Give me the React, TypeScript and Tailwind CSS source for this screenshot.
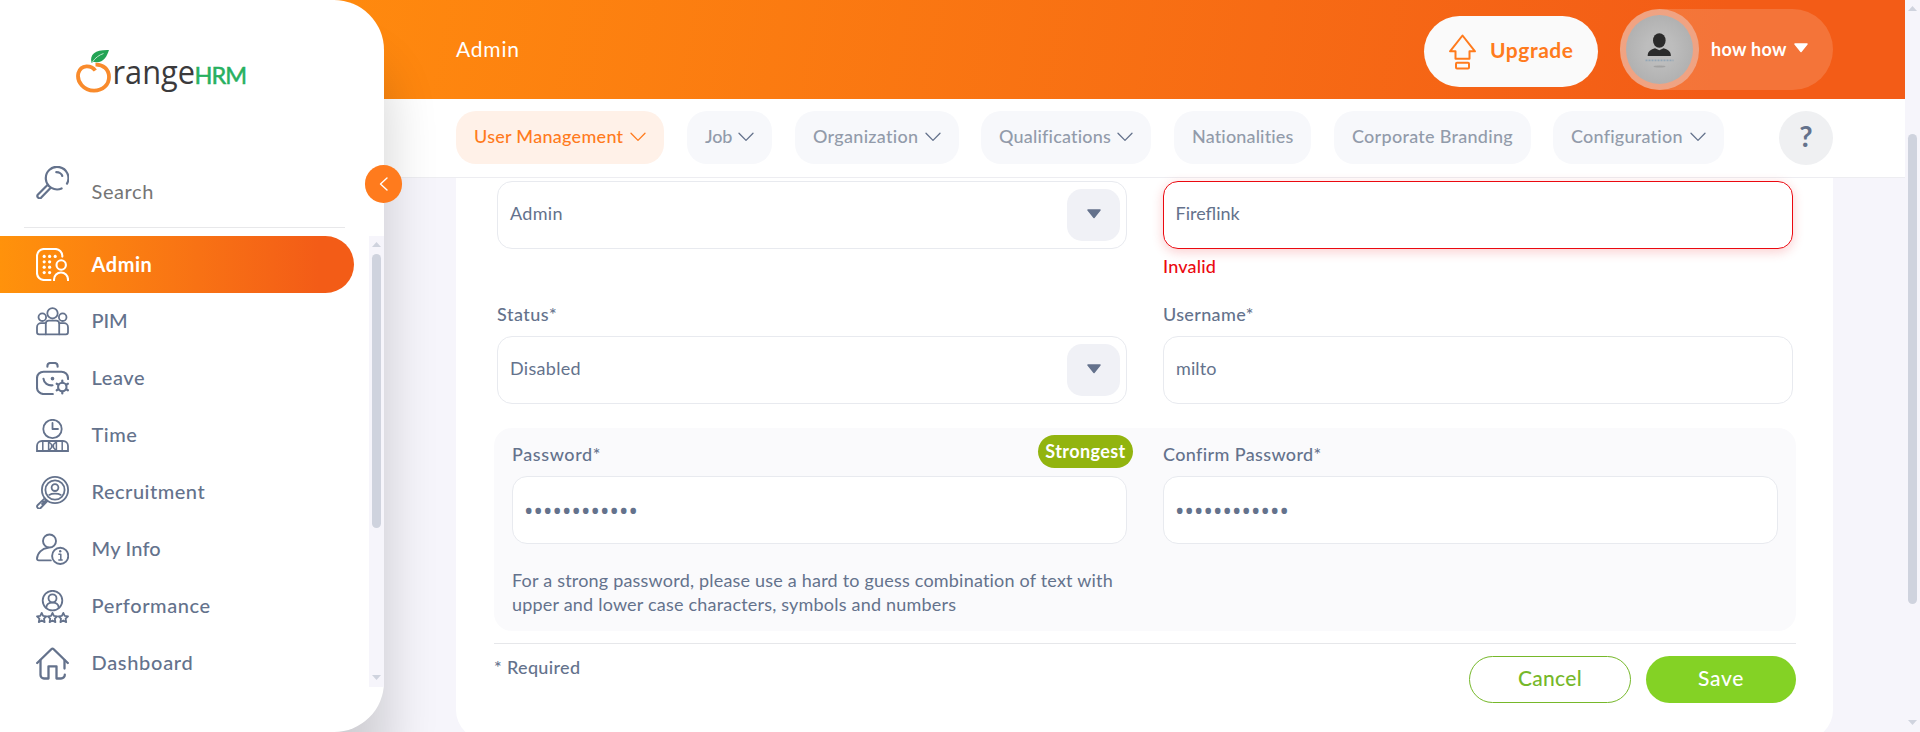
import React from "react";

type IconProps = { children: React.ReactNode; w?: number };
const Icon = ({ children, w = 1.8 }: IconProps) => (
  <svg width="33" height="33" viewBox="0 0 33 33" fill="none" stroke="currentColor" strokeWidth={w} strokeLinecap="round" strokeLinejoin="round" className="shrink-0">
    {children}
  </svg>
);

const SearchIcon = () => (
  <Icon w={2.2}>
    <path d="M31 17.6A11.3 11.3 0 1 0 25.6 22.5" />
    <path d="M20.3 6.2c3 0 5.6 1.8 6 3.8" />
    <path d="M10.2 20.3 2 28.6a2.2 2.2 0 0 0 3 3.2L14 22.6M10.2 20.3l1.8-1.6M14 22.6" />
  </Icon>
);
const AdminIcon = () => (
  <Icon w={2.1}>
    <path d="M26.3 8.6V8a7 7 0 0 0-7-7H8a7 7 0 0 0-7 7v17a7 7 0 0 0 7 7h6.5" />
    <circle cx="25.2" cy="17" r="4.7" />
    <path d="M18 32.3v-.8a7 7 0 0 1 14 0v.8" />
    <g fill="currentColor" stroke="none">
      <circle cx="8.2" cy="8.4" r="1.6" /><circle cx="13.6" cy="8.4" r="1.6" /><circle cx="19.2" cy="8.4" r="1.6" />
      <circle cx="8.2" cy="13.8" r="1.6" /><circle cx="13.6" cy="13.8" r="1.6" />
      <circle cx="8.2" cy="19.2" r="1.6" /><circle cx="13.6" cy="19.2" r="1.6" />
      <circle cx="8.2" cy="24.6" r="1.6" /><circle cx="13.6" cy="24.6" r="1.6" />
    </g>
  </Icon>
);
const PimIcon = () => (
  <Icon w={1.8}>
    <circle cx="16.5" cy="8.3" r="5.2" />
    <circle cx="6.3" cy="12.2" r="3.8" />
    <circle cx="26.7" cy="12.2" r="3.8" />
    <path d="M9.8 29.3V18.6a3 3 0 0 1 3-3h7.4a3 3 0 0 1 3 3v10.7" />
    <path d="M9.6 18.2H5a4 4 0 0 0-4 4v5.1a2 2 0 0 0 2 2h27a2 2 0 0 0 2-2v-5.1a4 4 0 0 0-4-4h-4.6" />
  </Icon>
);
const LeaveIcon = () => (
  <Icon w={2.1}>
    <path d="M11.4 4.8V4a3 3 0 0 1 3-3h4.2a3 3 0 0 1 3 3v.8" />
    <path d="M32 17v-.8a6.5 6.5 0 0 0-6.5-6.5h-18A6.5 6.5 0 0 0 1 16.2v9.3A6.5 6.5 0 0 0 7.5 32H16.8" />
    <path d="M7.5 16.8c.3 4.2 4.5 7 9 6.5" />
    <circle cx="16.5" cy="16.6" r=".8" fill="currentColor" />
    <circle cx="26.3" cy="25" r="4.2" />
    <path strokeWidth="2.2" d="M26.3 20.5v-2M26.3 31.5v-2M22.4 22.7l-1.7-1M31.9 28.3l-1.7-1M22.4 27.3l-1.7 1M31.9 21.7l-1.7 1" />
  </Icon>
);
const TimeIcon = () => (
  <Icon w={1.8}>
    <circle cx="16.5" cy="10" r="9.2" />
    <path d="M16.5 4v6h5.5" />
    <path strokeLinejoin="miter" d="M1 32v-5a5 5 0 0 1 5-5h21a5 5 0 0 1 5 5v5z" />
    <path strokeWidth="1.5" d="M6.8 23v9M12.6 22v10M20.4 22v10M26.2 23v9M13.4 23.5l2.2 2v3l-2.2 2.500M19.600 23.500l-2.200 2v3l2.200 2.500M15.600 27h1.800" />
  </Icon>
);
const RecruitmentIcon = () => (
  <Icon w={1.8}>
    <circle cx="19" cy="14" r="13.1" />
    <circle cx="19" cy="14" r="9.6" />
    <circle cx="19" cy="11.6" r="3.4" />
    <path d="M13.2 18.9c1.5-.9 3.5-1.2 5.8-1.2s4.300.3 5.800 1.200" />
    <path d="M8.7 22.3 1.8 29a2 2 0 0 0 2.8 3l6.7-6.9M7 25.7l1.8 1.8M10.4 23.8 6 28" />
  </Icon>
);
const InfoIcon = () => (
  <Icon w={1.9}>
    <circle cx="13.5" cy="8" r="6.5" />
    <path d="M14.8 27.4H2.7c-1 0-1.7-.7-1.7-1.7C1.3 20 6 15.4 12 14.8" />
    <circle cx="24.2" cy="22.9" r="8.1" />
    <path strokeWidth="1.5" strokeLinecap="butt" d="M22.3 21.3h2.5v6M22.3 27h4.4" />
    <circle cx="24.2" cy="18.3" r="1.2" fill="currentColor" stroke="none" />
  </Icon>
);
const STAR = "M0-4.700 1.400-1.700 4.700-1.300 2.300 1 2.900 4.500 0 2.900-2.900 4.500-2.300 1-4.700-1.300-1.400-1.700z";
const PerformanceIcon = () => (
  <Icon w={1.8}>
    <circle cx="16.5" cy="10.6" r="9.8" />
    <circle cx="16.5" cy="8.3" r="4" />
    <path d="M10.3 17.7c.2-3.2 2.5-5 6.2-5s6 1.8 6.2 5" />
    <path transform="translate(5.7 27.6)" d={STAR} />
    <path transform="translate(16.5 27.6)" d={STAR} />
    <path transform="translate(27.3 27.6)" d={STAR} />
  </Icon>
);
const DashboardIcon = () => (
  <Icon w={2.3}>
    <path d="M1.2 16 15.3 2.2a1.7 1.7 0 0 1 2.4 0L31.8 16" />
    <path d="M28.5 13.5V21.5" />
    <path d="M4.5 13.5V28a3.5 3.5 0 0 0 3.5 3.5h4.5V19.3h8v12.2h4.5a3.8 3.8 0 0 0 3.8-3.8" />
  </Icon>
);

const Logo = () => (
  <svg width="172" height="48" viewBox="0 0 172 48" className="ml-[76px] mt-[49px] block">
    <path d="M19.3 21.5C15.5 16.3 5 14.8 2.3 24.300.5 33 8 41.500 18 41.700c9 0 15-6 15-13.700 0-8-6-12.600-13.500-12.300" fill="none" stroke="#f98b2c" strokeWidth="3.8" />
    <path d="M15.5 13.5C13.5 5 19.5.6 33 1c-2 6.5-5.5 12.5-12.5 12.3-1.4 0-2.5-.3-3.5-.2l-1.5 1z" fill="#23a455" />
    <path d="M16.5 13C19 9 23 6 27.5 4.5" stroke="#bfe5cb" strokeWidth="1" fill="none" />
    <text x="36.5" y="35" fontFamily="Open Sans, sans-serif" fontSize="32" textLength="82.5" lengthAdjust="spacingAndGlyphs" fill="#3b3a3c">range</text>
    <text x="118.5" y="35" fontFamily="Lato, sans-serif" fontSize="23.5" textLength="52.5" lengthAdjust="spacing" fill="#27b05f" stroke="#27b05f" strokeWidth=".5">HRM</text>
  </svg>
);

const Chevron = () => (
  <svg width="16" height="10" viewBox="0 0 16 10" fill="none" stroke="currentColor" strokeWidth="1.3" strokeLinecap="round" strokeLinejoin="round" className="mb-px mr-[0.5px] shrink-0">
    <path d="M1 1.2 8 8.4 15 1.2" />
  </svg>
);

const Caret = () => (
  <svg width="14" height="10" viewBox="0 0 14 10" fill="currentColor" stroke="currentColor" strokeWidth="1.5" strokeLinejoin="round">
    <path d="M1 1h12L7 8.5z" />
  </svg>
);

const menu = [
  { label: "PIM", icon: <PimIcon />, cls: "tracking-[-0.1px]" },
  { label: "Leave", icon: <LeaveIcon />, cls: "tracking-[0.6px]" },
  { label: "Time", icon: <TimeIcon />, cls: "tracking-[0.5px]" },
  { label: "Recruitment", icon: <RecruitmentIcon />, cls: "tracking-[0.5px]" },
  { label: "My Info", icon: <InfoIcon />, cls: "tracking-[0.2px]" },
  { label: "Performance", icon: <PerformanceIcon />, cls: "tracking-[0.6px]" },
  { label: "Dashboard", icon: <DashboardIcon />, cls: "tracking-[0.7px]" },
];

const tabs = [
  { label: "Job", arrow: true, cls: "ml-[23px] w-[85px]", t: "tracking-[-0.1px]" },
  { label: "Organization", arrow: true, cls: "ml-[23px] w-[164px]", t: "tracking-[0.3px]" },
  { label: "Qualifications", arrow: true, cls: "ml-[22px] w-[170px]", t: "tracking-[0.2px]" },
  { label: "Nationalities", arrow: false, cls: "ml-[23px] w-[137px]", t: "tracking-[0.15px]" },
  { label: "Corporate Branding", arrow: false, cls: "ml-[23px] w-[197px]", t: "tracking-[0.28px]" },
  { label: "Configuration", arrow: true, cls: "ml-[22px] w-[171px]", t: "tracking-[0.23px]" },
];

const UpArrow = () => (
  <svg width="9" height="5" viewBox="0 0 9 5" fill="#cfd3de" className="block"><path d="M0 5 4.5 0 9 5z" /></svg>
);
const DownArrow = () => (
  <svg width="9" height="5" viewBox="0 0 9 5" fill="#cfd3de" className="block"><path d="M0 0h9L4.5 5z" /></svg>
);

const Select = ({ value, t }: { value: string; t: string }) => (
  <div className="flex h-[68px] w-[630px] items-center justify-between rounded-[15px] border border-[#e8eaef] bg-white pl-3 pr-1.5">
    <span className={`pb-1 text-[18px] ${t}`}>{value}</span>
    <span className="flex h-[52px] w-[53px] items-center justify-center rounded-[15px] bg-[#f0f1f6] pb-[3px]"><Caret /></span>
  </div>
);

const PasswordDots = () => (
  <div className="flex h-[68px] items-center rounded-[15px] border border-[#e8eaef] bg-white pl-[11px] pt-0.5 font-['Noto_Sans',sans-serif] text-[25px]">
    <span className="tracking-[0.1px]">••••••••••••</span>
  </div>
);

export default function App() {
  return (
    <div className="flex h-[732px] w-[1920px] overflow-hidden bg-[#f6f5fb] font-['Lato',sans-serif] text-[#64728c]">
      <aside className="relative z-10 flex h-[732px] w-[384px] shrink-0 flex-col rounded-r-[50px] bg-white shadow-[5px_60px_50px_rgba(0,0,0,0.16)]">
        <Logo />
        <div className="mt-[69px] flex h-[61px] items-start pl-9">
          <SearchIcon />
          <span className="ml-[22.5px] mt-[10px] text-[20px] leading-[30px] tracking-[0.6px] text-[#757575]">Search</span>
        </div>
        <div className="ml-6 h-px w-[321px] bg-[#e8e8ea]" />
        <div className="mt-2 flex h-[451px] justify-between">
          <nav className="w-[354px]">
            <div className="flex h-[57px] items-center rounded-r-[29px] bg-gradient-to-r from-[#ff920b] to-[#f35c17] to-90% pl-9 text-white">
              <AdminIcon />
              <span className="ml-[22.5px] pb-0.5 text-[20px] font-bold tracking-[0.55px]">Admin</span>
            </div>
            {menu.map((m) => (
              <div key={m.label} className="flex h-[57px] items-center pl-9">
                {m.icon}
                <span className={`ml-[22.5px] pb-[3px] text-[20px] font-medium ${m.cls}`}>{m.label}</span>
              </div>
            ))}
          </nav>
          <div className="flex w-[15px] flex-col items-center bg-[#f6f5fb] pb-[7px] pt-[6px]">
            <UpArrow />
            <div className="mt-[7px] h-[274px] w-[9px] rounded-full bg-[#cfd3de]" />
            <div className="mt-auto"><DownArrow /></div>
          </div>
        </div>
        <button className="absolute left-[365px] top-[165px] flex h-[38px] w-[37px] items-center justify-center rounded-full bg-[#ff7b1d] text-white">
          <svg width="9" height="14" viewBox="0 0 9 14" fill="none" stroke="currentColor" strokeWidth="1.4" strokeLinecap="round" strokeLinejoin="round"><path d="M8 1 1.5 7 8 13" /></svg>
        </button>
      </aside>

      <main className="-ml-[60px] flex w-[1581px] shrink-0 flex-col">
        <header className="flex h-[99px] shrink-0 items-start bg-[linear-gradient(100deg,#ff8a0e,#f35c17_88%)] pl-[132px] text-white">
          <h1 className="mt-[34px] text-[21px] leading-[30px] tracking-[0.8px]">Admin</h1>
          <button className="ml-auto mt-4 flex h-[71px] w-[174px] items-center rounded-full bg-[#fafafa] pl-6 text-[#ff7b1d]">
            <svg width="29" height="36" viewBox="0 0 29 36" fill="none" stroke="currentColor" strokeWidth="2" strokeLinejoin="round">
              <path d="M14.5 1.5 27 17.3h-5.5v7.4h-14v-7.4H2z" />
              <rect x="8" y="28.7" width="13" height="5.8" rx="1" />
            </svg>
            <span className="ml-[13px] pb-[3px] text-[21px] font-bold tracking-[0.55px]">Upgrade</span>
          </button>
          <div className="ml-[22px] mr-[72px] mt-[9px] flex h-[81px] w-[213px] items-center rounded-full bg-white/15">
            <div className="flex h-[81px] w-[79px] items-center justify-center rounded-full bg-[#e8e8f2]/40">
              <svg width="67" height="69" viewBox="0 0 67 69">
                <defs>
                  <radialGradient id="av"><stop offset="0.4" stopColor="#bdbdbd" /><stop offset="1" stopColor="#b1b1b1" /></radialGradient>
                </defs>
                <ellipse cx="33.5" cy="34.5" rx="33.5" ry="34.5" fill="url(#av)" />
                <ellipse cx="33.3" cy="25.5" rx="6.3" ry="7.3" fill="#2b2b2b" />
                <path d="M21.7 41c0-5 3.3-6.5 7.3-7.7l4.3 2 4.3-2c4 1.2 7.3 2.7 7.3 7.7z" fill="#2b2b2b" />
                <path d="M19.5 45.3h28" stroke="#93a6b6" strokeWidth="1.8" strokeDasharray="2 1" />
                <ellipse cx="33.5" cy="51.5" rx="6" ry="1" fill="#a2a2a2" />
              </svg>
            </div>
            <span className="ml-3 text-[18px] font-bold tracking-[0.3px]">how how</span>
            <span className="ml-[7px] pb-[3px]"><Caret /></span>
          </div>
        </header>

        <div className="flex h-[79px] shrink-0 items-start border-b border-[#ededf1] bg-white pl-[132px] pt-3 text-[18px] font-medium">
          <div className="flex h-[53px] w-[208px] items-center justify-between rounded-[20px] bg-[#fff1e8] px-[18px] text-[#ff7b1d]">
            <span className="pb-0.5 tracking-[0.28px]">User Management</span>
            <Chevron />
          </div>
          {tabs.map((t) => (
            <div key={t.label} className={`flex h-[53px] items-center justify-between rounded-[20px] bg-[#f7f8fb] px-[18px] ${t.cls}`}>
              <span className={`whitespace-nowrap pb-0.5 text-[#929baa] ${t.t}`}>{t.label}</span>
              {t.arrow && <Chevron />}
            </div>
          ))}
          <div className="ml-auto mr-[72px] flex h-[54px] w-[54px] items-center justify-center rounded-full bg-[#eff0f2] pb-1 text-[29px] font-bold">?</div>
        </div>

        <section className="ml-[132px] h-[562px] w-[1377px] shrink-0 rounded-b-[30px] bg-white pl-[38px] pt-[3px]">
          <div className="flex gap-9 pl-[3px]">
            <Select value="Admin" t="tracking-[0.3px]" />
            <div className="flex flex-col">
              <div className="flex h-[68px] w-[630px] items-center rounded-[15px] border border-[#eb0910] pb-1 pl-[11.5px] text-[18px] shadow-[0_3px_12px_rgba(235,9,16,0.2)] tracking-[0px]">Fireflink</div>
              <span className="mt-1 text-[18px] font-medium leading-[26px] text-[#eb0910] tracking-[0.2px]">Invalid</span>
            </div>
          </div>
          <div className="mt-[22px] flex gap-9 pl-[3px]">
            <div>
              <div className="h-[35px] text-[18px] font-medium leading-[26px] tracking-[0.5px]">Status*</div>
              <Select value="Disabled" t="tracking-[0.3px]" />
            </div>
            <div>
              <div className="h-[35px] text-[18px] font-medium leading-[26px] tracking-[0.35px]">Username*</div>
              <div className="flex h-[68px] w-[630px] items-center rounded-[15px] border border-[#e8eaef] pb-1 pl-3 text-[18px] tracking-[0.1px]">milto</div>
            </div>
          </div>
          <div className="mt-6 h-[203px] w-[1302px] rounded-[18px] bg-[#fafafc] pl-[18px] pt-[7px]">
            <div className="flex gap-9">
              <div className="w-[615px]">
                <div className="flex h-[41px] items-start justify-between">
                  <span className="mt-1.5 text-[18px] font-medium leading-[26px] tracking-[0.6px]">Password*</span>
                  <span className="-mr-1.5 flex h-[33px] w-[95px] items-center justify-center rounded-full bg-[#92b40f] text-[18px] font-bold text-white tracking-[0.4px]">Strongest</span>
                </div>
                <PasswordDots />
                <p className="mt-[23.5px] text-[18px] leading-6 tracking-[0.2px]">
                  For a strong password, please use a hard to guess combination of text with<br />upper and lower case characters, symbols and numbers
                </p>
              </div>
              <div className="w-[615px]">
                <div className="h-[41px] pt-1.5 text-[18px] font-medium leading-[26px] tracking-[0.37px]">Confirm Password*</div>
                <PasswordDots />
              </div>
            </div>
          </div>
          <div className="mt-3 flex w-[1302px] items-start border-t border-[#e6e7ea] pt-3">
            <span className="-mt-0.5 text-[18px] font-medium leading-[26px] tracking-[0.35px]">* Required</span>
            <button className="ml-auto h-[47px] w-[162px] rounded-full border border-[#76b82a] pb-1 text-[21px] font-medium text-[#76b82a] tracking-[0.3px]">Cancel</button>
            <button className="ml-[15px] h-[47px] w-[150px] rounded-full bg-[#84d225] pb-1 text-[21px] font-medium text-white tracking-[0.7px]">Save</button>
          </div>
        </section>
      </main>

      <div className="flex w-[15px] shrink-0 flex-col items-center bg-[#f6f5fb] pb-[7px] pt-[6px]">
        <UpArrow />
        <div className="mt-[123px] h-[470px] w-[9px] rounded-full bg-[#cfd3de]" />
        <div className="mt-auto"><DownArrow /></div>
      </div>
    </div>
  );
}
